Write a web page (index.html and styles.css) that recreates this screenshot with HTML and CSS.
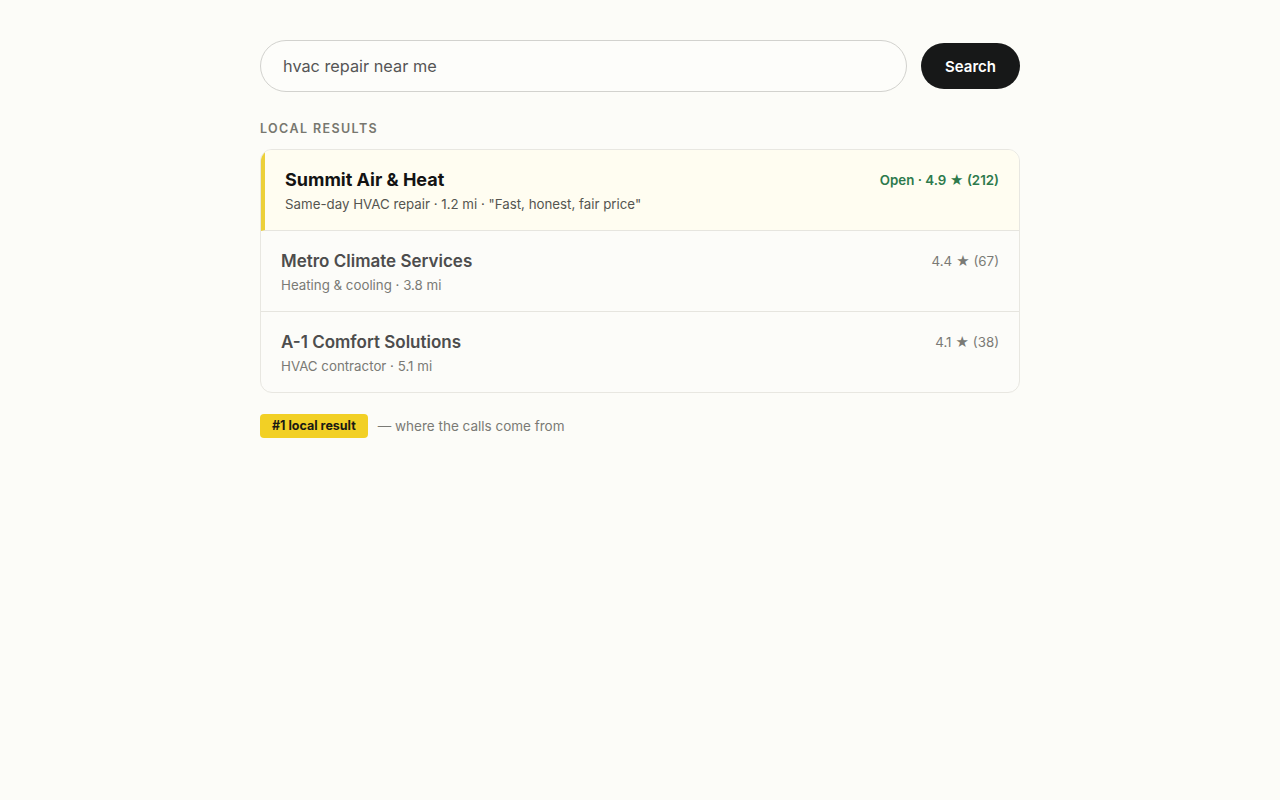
FILE: index.html
```html
<!DOCTYPE html>
<html lang="en">
<head>
<meta charset="utf-8">
<title>Local results</title>
<link rel="stylesheet" href="styles.css">
</head>
<body>
<main class="wrap">
  <form class="search">
    <div class="search-input">hvac repair near me</div>
    <button class="search-btn" type="button">Search</button>
  </form>
  <div class="label">LOCAL RESULTS</div>
  <ul class="results">
    <li class="row row-top">
      <div class="info">
        <div class="name">Summit Air &amp; Heat</div>
        <div class="meta">Same-day HVAC repair · 1.2 mi · "Fast, honest, fair price"</div>
      </div>
      <div class="rating">Open · 4.9 ★ (212)</div>
    </li>
    <li class="row">
      <div class="info">
        <div class="name">Metro Climate Services</div>
        <div class="meta">Heating &amp; cooling · 3.8 mi</div>
      </div>
      <div class="rating">4.4 ★ (67)</div>
    </li>
    <li class="row">
      <div class="info">
        <div class="name">A-1 Comfort Solutions</div>
        <div class="meta">HVAC contractor · 5.1 mi</div>
      </div>
      <div class="rating">4.1 ★ (38)</div>
    </li>
  </ul>
  <div class="note">
    <span class="badge">#1 local result</span>
    <span class="note-text">— where the calls come from</span>
  </div>
</main>
</body>
</html>
```

FILE: styles.css
```css
* { box-sizing: border-box; }
html, body {
  margin: 0;
  background: #fcfcf8;
  font-family: Inter, "Noto Sans", sans-serif;
  color: #222;
}
.wrap {
  width: 760px;
  margin: 40px auto 0;
}
.search {
  display: flex;
  align-items: center;
  gap: 14px;
  margin: 0;
}
.search-input {
  flex: 1;
  height: 52px;
  border: 1px solid #d2d2ce;
  border-radius: 26px;
  background: #fdfdfa;
  padding: 0 22px;
  display: flex;
  align-items: center;
  font-size: 16.3px;
  color: #555;
}
.search-btn {
  width: 99px;
  height: 46px;
  border: none;
  border-radius: 23px;
  background: #171818;
  color: #fff;
  font-family: inherit;
  font-size: 15px;
  font-weight: 600;
}
.label {
  margin-top: 29px;
  font-size: 12.5px;
  font-weight: 600;
  letter-spacing: 1.4px;
  color: #77776f;
  line-height: 16px;
}
.results {
  list-style: none;
  margin: 12px 0 0;
  padding: 0;
  border: 1px solid #e8e7e1;
  border-radius: 12px;
  overflow: hidden;
  background: #fcfcf9;
}
.row {
  display: flex;
  justify-content: space-between;
  align-items: flex-start;
  padding: 17px 20px 16px;
  border-bottom: 1px solid #e6e5df;
}
.row:last-child { border-bottom: none; }
.row-top {
  background: #fffdf1;
  border-left: 4px solid #ecd03a;
  padding-left: 20px;
}
.name {
  font-size: 17px;
  line-height: 26px;
  font-weight: 600;
  color: #4d4d4d;
}
.row-top .name {
  font-size: 18px;
  font-weight: 700;
  color: #131313;
}
.meta {
  margin-top: 1px;
  font-size: 13.3px;
  line-height: 20px;
  color: #7a7a75;
}
.row-top .meta { color: #555550; }
.rating {
  font-size: 13.3px;
  line-height: 26px;
  color: #7a7a75;
}
.row-top .rating {
  color: #2d7a4c;
  font-weight: 600;
}
.note {
  display: flex;
  align-items: center;
  gap: 10px;
  margin-top: 21px;
}
.badge {
  background: #f2d025;
  color: #1a1a14;
  font-size: 12.5px;
  font-weight: 700;
  padding: 0 12px;
  height: 24px;
  line-height: 24px;
  border-radius: 4px;
}
.note-text {
  font-size: 13.5px;
  color: #7a7a75;
}
```
